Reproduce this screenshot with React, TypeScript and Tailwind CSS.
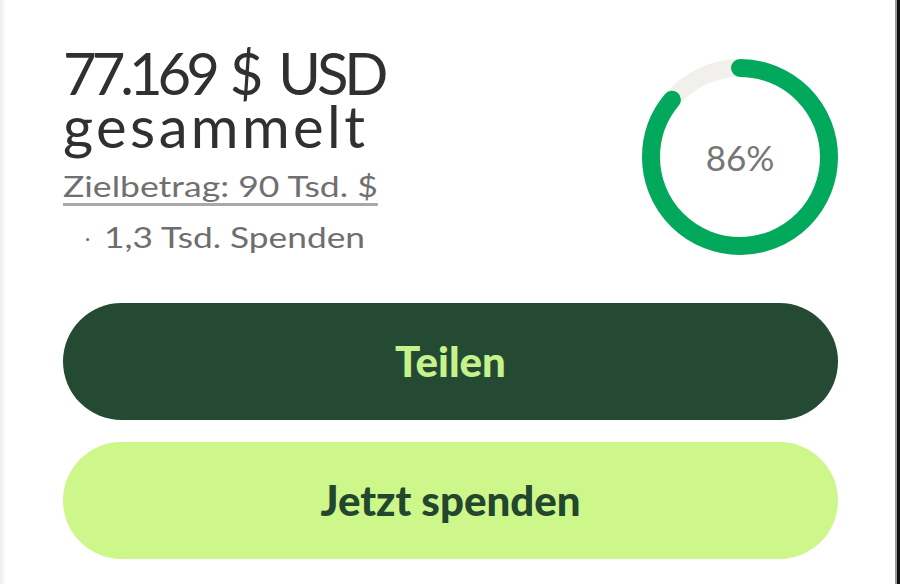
import React from "react";

function Ring() {
  const r = 89;
  const c = 2 * Math.PI * r;
  const p = 0.86 * c;
  return (
    <div className="relative w-[196px] h-[196px] mt-[13px] shrink-0">
      <svg width="196" height="196" viewBox="0 0 196 196" className="block">
        <circle cx="98" cy="98" r={r} fill="none" stroke="#f1f0ec" strokeWidth="18" />
        <circle
          cx="98"
          cy="98"
          r={r}
          fill="none"
          stroke="#02a95c"
          strokeWidth="18"
          strokeLinecap="round"
          strokeDasharray={`${p} ${c}`}
          transform="rotate(-90 98 98)"
        />
      </svg>
      <div className="absolute inset-0 flex items-center justify-center text-[35px] text-[#767676] font-['Lato',sans-serif]">
        86%
      </div>
    </div>
  );
}

export default function App() {
  return (
    <div className="w-[900px] h-[584px] bg-white flex overflow-hidden font-['Lato',sans-serif]">
      <div className="w-[6px] bg-gradient-to-r from-[#ececec] to-white shrink-0" />
      <div className="flex-1 flex flex-col pl-[57px] pr-[57px] pt-[46px]">
        <div className="flex justify-between items-start">
          <div className="flex flex-col">
            <div className="text-[58px] leading-[53px] text-[#303030]">
              <div className="whitespace-nowrap">
                <span className="tracking-[-5px]">77.169</span> $ <span className="tracking-[-4px]">USD</span>
              </div>
              <div className="tracking-[3.4px]">gesammelt</div>
            </div>
            <div className="mt-[14px] text-[28px] leading-[40px] text-[#707070] whitespace-nowrap">
              <span className="inline-block origin-left scale-x-[1.27] underline decoration-[#a8a8a8] decoration-[3px] underline-offset-[6px]">
                Zielbetrag: 90 Tsd. $
              </span>
            </div>
            <div className="mt-[11px] text-[28px] leading-[40px] text-[#6e6e6e] flex items-center whitespace-nowrap">
              <span className="ml-[22px] mr-[14px] text-[20px]">·</span>
              <span className="inline-block origin-left scale-x-[1.26]">1,3 Tsd. Spenden</span>
            </div>
          </div>
          <Ring />
        </div>
        <div className="mt-[46px] flex flex-col gap-[22px]">
          <button className="h-[117px] w-full rounded-full bg-[#254a33] text-[#c6f28c] text-[42px] font-black">
            Teilen
          </button>
          <button className="h-[117px] w-full rounded-full bg-[#cdf78b] text-[#23472e] text-[42px] font-black">
            Jetzt spenden
          </button>
        </div>
      </div>
      <div className="w-[2px] bg-[#9a9a9a] shrink-0" />
      <div className="w-[3px] bg-[#111111] shrink-0" />
    </div>
  );
}
